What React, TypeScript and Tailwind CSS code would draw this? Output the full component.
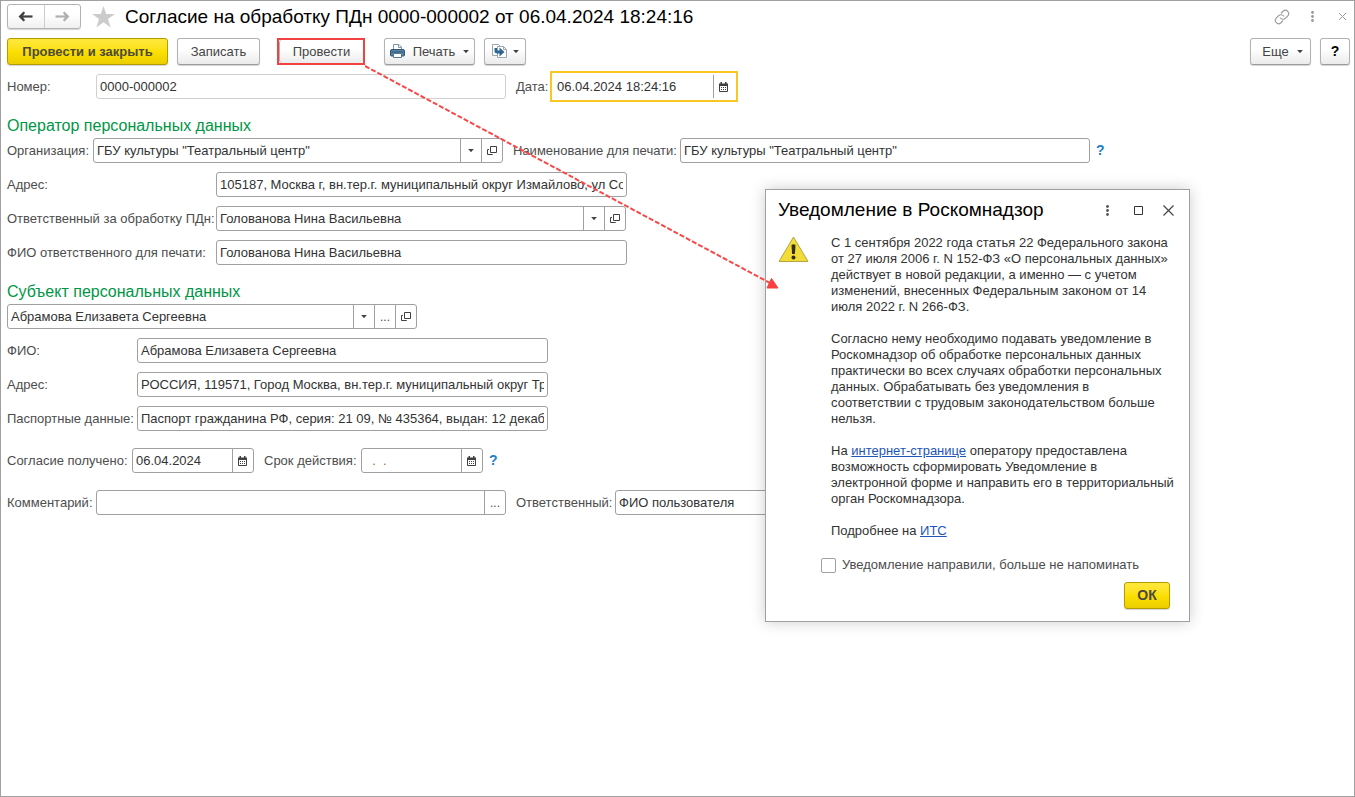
import React from 'react';

type FieldButton = 'calendar' | 'dropdown' | 'open' | 'more';

const CalendarIcon = () => (
  <svg width="9" height="10" viewBox="0 0 9 10" fill="none" className="mr-px" aria-hidden="true">
    <path d="M0.5 2.5h8v7h-8z" stroke="#404040" />
    <path d="M0 1.5h9V4H0zM1.500 0H3v2H1.500zM6 0h1.500v2H6z" fill="#404040" />
    <path d="M2 5h1v1H2zM4 5h1v1H4zM6 5h1v1H6zM2 7h1v1H2zM4 7h1v1H4zM6 7h1v1H6z" fill="#404040" />
  </svg>
);

const CaretIcon = () => (
  <svg width="6" height="3" viewBox="0 0 6 3" aria-hidden="true">
    <path d="M0.500 0h5L3 3z" fill="#404040" stroke="#404040" strokeWidth="0.400" />
  </svg>
);

const OpenIcon = () => (
  <svg width="10" height="10" viewBox="0 0 10 10" fill="none" stroke="#404040" aria-hidden="true">
    <path d="M3.500 0.500h6v6h-6z" />
    <path d="M2 3.500H0.500v5h5V8" />
  </svg>
);

const DotsIcon = ({ color }: { color: string }) => (
  <svg width="3" height="11" viewBox="0 0 3 11" fill={color} aria-hidden="true">
    <circle cx="1.500" cy="1.500" r="1.400" />
    <circle cx="1.500" cy="5.500" r="1.400" />
    <circle cx="1.500" cy="9.500" r="1.400" />
  </svg>
);

const PrinterIcon = () => (
  <svg width="15" height="15" viewBox="0 0 15 15" fill="none" aria-hidden="true">
    <path d="M3.500 6V0.500h5.500l2.500 2.500v3" fill="#fff" stroke="#7f98ac" />
    <path d="M8.500 0.500v3h3" stroke="#7f98ac" />
    <path d="M2 5.500h11a1.500 1.500 0 0 1 1.500 1.500v4a1 1 0 0 1-1 1h-12a1 1 0 0 1-1-1V7A1.500 1.500 0 0 1 2 5.500z" fill="#5583a8" stroke="#2f5673" />
    <path d="M1.500 8h12" stroke="#2f5673" />
    <path d="M3.500 9.500h8v4h-8z" fill="#fff" stroke="#58788f" />
  </svg>
);

const CopyToIcon = () => (
  <svg width="15" height="15" viewBox="0 0 15 15" fill="none" aria-hidden="true">
    <path d="M0.500 0.500h6l2 2v9h-8z" fill="#fff" stroke="#9aa7b1" />
    <path d="M5.500 2.500h6l3 3v8h-9z" fill="#fff" stroke="#9aa7b1" />
    <path d="M11.500 2.500v3h3" stroke="#9aa7b1" />
    <path d="M2.500 4h2.500v2.500h2.500V3.500l5 4.500-5 4.500V9.500H5.500Q2.500 9.500 2.500 7z" fill="#2d6791" />
  </svg>
);

const ArrowIcon = ({ color }: { color: string }) => (
  <svg width="15" height="11" viewBox="0 0 15 11" fill="none" aria-hidden="true">
    <path d="M3 5.500h11.500" stroke={color} strokeWidth="2.200" />
    <path d="M5.500 0.500L0.500 5.500l5 5 1.600-1.200L4.500 5.500l2.600-3.800z" fill={color} />
  </svg>
);

const buttonContent: Record<FieldButton, { label: string; icon: React.ReactNode }> = {
  calendar: { label: 'Выбрать дату', icon: <CalendarIcon /> },
  dropdown: { label: 'Показать список', icon: <CaretIcon /> },
  open: { label: 'Открыть', icon: <OpenIcon /> },
  more: { label: 'Выбрать', icon: <span className="text-[12px] leading-none">...</span> },
};

interface FieldProps {
  id: string;
  value: string;
  width: string;
  label?: string;
  labelWidth?: string;
  buttons?: FieldButton[];
  frame?: string;
  inputClass?: string;
}

const defaultFrame = 'h-[25px] border border-[#a0a0a0] rounded-[3px]';

const Field: React.FC<FieldProps> = ({
  id,
  value,
  width,
  label,
  labelWidth = '',
  buttons = [],
  frame = defaultFrame,
  inputClass = 'text-[#333]',
}) => (
  <div className="flex items-center">
    {label && (
      <label htmlFor={id} className={`shrink-0 whitespace-nowrap ${labelWidth}`}>
        {label}
      </label>
    )}
    <div className={`flex shrink-0 overflow-hidden bg-white ${frame} ${width}`}>
      <input
        id={id}
        defaultValue={value}
        aria-label={label ? undefined : 'Субъект'}
        className={`min-w-0 flex-1 px-[3px] outline-none ${inputClass}`}
      />
      {buttons.map((kind) => (
        <button
          key={kind}
          type="button"
          aria-label={buttonContent[kind].label}
          className="flex w-[21px] shrink-0 items-center justify-center border-l border-[#a0a0a0]"
        >
          {buttonContent[kind].icon}
        </button>
      ))}
    </div>
  </div>
);

const plainButton =
  'flex h-[27px] items-center justify-center rounded-[3px] border border-[#b3b3b3] border-b-[#9a9a9a] bg-linear-to-b from-white from-40% to-[#ebebeb] shadow-[0_1px_1px_#d4d4d4]';
const yellowButton =
  'flex h-[27px] items-center justify-center rounded-[3px] border border-[#b39b00] bg-linear-to-b from-[#ffe83c] via-[#fbe000] to-[#ebcd00] font-bold text-[#4d4a3a] shadow-[0_1px_1px_#d4d4d4]';

const Header = () => (
  <header className="flex h-[25px] items-center">
    <div className="flex h-[25px] w-[74px] rounded-[3px] border border-[#b3b3b3] bg-linear-to-b from-white from-40% to-[#f0f0f0] shadow-[0_1px_1px_#d4d4d4]">
      <button type="button" aria-label="Назад" className="flex flex-1 items-center justify-center border-r border-[#ccc]">
        <ArrowIcon color="#404040" />
      </button>
      <button type="button" aria-label="Вперед" className="flex flex-1 items-center justify-center">
        <span className="rotate-180">
          <ArrowIcon color="#b0b0b0" />
        </span>
      </button>
    </div>
    <button type="button" aria-label="Добавить в избранное" className="ml-[11px]">
      <svg width="23" height="22" viewBox="0 0 23 22" fill="#ccc" aria-hidden="true">
        <path d="M11.500 0l2.700 8H23l-7 5 2.700 8.500-7.200-5.200-7.200 5.200L7 13 0 8h8.800z" />
      </svg>
    </button>
    <h1 className="ml-[10px] text-[19px] leading-6 whitespace-nowrap text-black">
      Согласие на обработку ПДн 0000-000002 от 06.04.2024 18:24:16
    </h1>
    <div className="ml-auto flex items-center pr-[4px]">
      <button type="button" aria-label="Получить ссылку">
        <svg width="16" height="16" viewBox="0 0 24 24" fill="none" stroke="#999" strokeWidth="1.700" strokeLinecap="round" aria-hidden="true">
          <path d="M9.500 13.500a5 5 0 0 0 7.500.5l4-4a5 5 0 0 0-7-7l-3 3" />
          <path d="M14.500 10.500a5 5 0 0 0-7.500-.5l-4 4a5 5 0 0 0 7 7l3-3" />
        </svg>
      </button>
      <button type="button" aria-label="Меню" className="ml-[21px]">
        <DotsIcon color="#999" />
      </button>
      <button type="button" aria-label="Закрыть" className="ml-[25px]">
        <svg width="7" height="7" viewBox="0 0 7 7" stroke="#999" aria-hidden="true">
          <path d="M0 0l7 7M7 0L0 7" />
        </svg>
      </button>
    </div>
  </header>
);

const Toolbar = () => (
  <div className="mt-[9px] flex items-center text-[#444]">
    <button type="button" className={`w-[161px] ${yellowButton}`}>Провести и закрыть</button>
    <button type="button" className={`ml-[9px] w-[83px] ${plainButton}`}>Записать</button>
    <div className="ml-[17px] flex h-[27px] border-2 border-[#f24141]">
      <button
        type="button"
        className="w-[84px] rounded-[3px] border-l border-[#b3b3b3] bg-linear-to-b from-white from-40% to-[#ebebeb]"
      >
        Провести
      </button>
    </div>
    <button type="button" className={`ml-[19px] w-[91px] gap-2 ${plainButton}`}>
      <PrinterIcon />
      <span>Печать</span>
      <CaretIcon />
    </button>
    <button type="button" aria-label="Создать на основании" className={`ml-[9px] w-[42px] gap-[6px] ${plainButton}`}>
      <CopyToIcon />
      <CaretIcon />
    </button>
    <button type="button" className={`ml-auto w-[61px] gap-2 pl-[4px] ${plainButton}`}>
      Еще
      <CaretIcon />
    </button>
    <button type="button" className={`ml-[9px] w-[30px] text-[14px] font-bold text-black ${plainButton}`}>?</button>
  </div>
);

const Help = () => (
  <button type="button" aria-label="Подсказка" className="ml-[6px] text-[14px] font-bold text-[#1c7fc4]">?</button>
);

const SectionTitle = ({ children }: { children: React.ReactNode }) => (
  <h2 className="text-[16px] leading-5 text-[#009646]">{children}</h2>
);

const NoticeDialog = () => (
  <section
    role="dialog"
    aria-labelledby="notice-title"
    className="absolute top-[188px] left-[764px] w-[425px] border border-[#a0a0a0] bg-white px-[12px] pt-[8px] pb-[12px] shadow-[0_0_14px_rgba(0,0,0,0.2)]"
  >
    <div className="flex h-[24px] items-center">
      <h2 id="notice-title" className="text-[19px] leading-6 whitespace-nowrap text-black">
        Уведомление в Роскомнадзор
      </h2>
      <div className="ml-auto flex items-center pr-[3px]">
        <button type="button" aria-label="Меню">
          <DotsIcon color="#555" />
        </button>
        <button type="button" aria-label="Развернуть" className="ml-[25px]">
          <svg width="9" height="9" viewBox="0 0 9 9" fill="none" stroke="#333" aria-hidden="true">
            <path d="M0.500 0.500h8v8h-8z" />
          </svg>
        </button>
        <button type="button" aria-label="Закрыть" className="ml-[20px]">
          <svg width="11" height="11" viewBox="0 0 11 11" stroke="#444" strokeWidth="1.200" aria-hidden="true">
            <path d="M0.500 0.500l10 10M10.500 0.500l-10 10" />
          </svg>
        </button>
      </div>
    </div>

    <div className="mt-[13px] flex gap-[22px] text-[#333]">
      <svg width="31" height="27" viewBox="0 0 31 27" className="mt-[1px] shrink-0" aria-hidden="true">
        <path d="M15.500 1L30 25.500H1z" fill="#f3dc37" stroke="#b3a540" strokeLinejoin="round" />
        <path d="M13.500 9q2-1.500 4 0l-.6 9h-2.800z" fill="#332f10" />
        <circle cx="15.500" cy="21.500" r="2" fill="#332f10" />
      </svg>
      <div className="flex flex-col gap-4 leading-4 whitespace-nowrap">
        <p>
          С 1 сентября 2022 года статья 22 Федерального закона<br />
          от 27 июля 2006 г. N 152-ФЗ «О персональных данных»<br />
          действует в новой редакции, а именно — с учетом<br />
          изменений, внесенных Федеральным законом от 14<br />
          июля 2022 г. N 266-ФЗ.
        </p>
        <p>
          Согласно нему необходимо подавать уведомление в<br />
          Роскомнадзор об обработке персональных данных<br />
          практически во всех случаях обработки персональных<br />
          данных. Обрабатывать без уведомления в<br />
          соответствии с трудовым законодательством больше<br />
          нельзя.
        </p>
        <p>
          На <a href="#portal" className="text-[#1d55b8] underline">интернет-странице</a> оператору предоставлена<br />
          возможность сформировать Уведомление в<br />
          электронной форме и направить его в территориальный<br />
          орган Роскомнадзора.
        </p>
        <p>
          Подробнее на <a href="#its" className="text-[#1d55b8] underline">ИТС</a>
        </p>
      </div>
    </div>

    <label className="mt-[18px] ml-[43px] flex items-center gap-[6px] leading-4">
      <input
        type="checkbox"
        className="h-[15px] w-[15px] appearance-none rounded-[2px] border border-[#a0a0a0] bg-white checked:bg-[#fbe000]"
      />
      Уведомление направили, больше не напоминать
    </label>
    <div className="mt-[9px] flex justify-end pr-[7px]">
      <button type="button" className={`w-[46px] text-[14px] ${yellowButton}`}>ОК</button>
    </div>
  </section>
);

// Dashed callout from the "Провести" button to the notice window
const Callout = () => (
  <svg className="pointer-events-none absolute top-[64px] left-[364px]" width="416" height="228" viewBox="0 0 416 228" aria-hidden="true">
    <path d="M0 1L405 218" stroke="#f94848" strokeWidth="2" strokeDasharray="5 2" />
    <path d="M413 223L402 223L406.500 213.500z" fill="#f94040" stroke="#f94040" strokeLinejoin="round" />
  </svg>
);

export default function App() {
  return (
    <main className="relative min-h-screen overflow-hidden border border-[#a0a0a0] bg-white pt-[3px] pr-[4px] pl-[6px] font-['Liberation_Sans',Arial,sans-serif] text-[13px] text-[#4d4d4d]">
      <Header />
      <Toolbar />

      <div className="mt-[6px] flex items-center">
        <Field
          id="number"
          label="Номер:"
          labelWidth="w-[89px]"
          value="0000-000002"
          width="w-[410px]"
          frame="h-[25px] border border-[#d0d0d0] rounded-[3px]"
        />
        <div className="ml-[10px]">
          <Field
            id="date"
            label="Дата:"
            labelWidth="w-[34px]"
            value="06.04.2024 18:24:16"
            width="w-[188px]"
            frame="h-[31px] border-2 border-[#f9c623] p-[2px]"
            buttons={['calendar']}
          />
        </div>
      </div>

      <section className="mt-[14px]">
        <SectionTitle>Оператор персональных данных</SectionTitle>
        <div className="mt-[2px] flex flex-col gap-[9px]">
          <div className="flex items-center">
            <Field
              id="organization"
              label="Организация:"
              labelWidth="w-[86px]"
              value={'ГБУ культуры "Театральный центр"'}
              width="w-[410px]"
              buttons={['dropdown', 'open']}
            />
            <div className="ml-[10px]">
              <Field
                id="print-name"
                label="Наименование для печати:"
                labelWidth="w-[167px]"
                value={'ГБУ культуры "Театральный центр"'}
                width="w-[410px]"
              />
            </div>
            <Help />
          </div>
          <Field
            id="operator-address"
            label="Адрес:"
            labelWidth="w-[209px]"
            value="105187, Москва г, вн.тер.г. муниципальный округ Измайлово, ул Советская"
            width="w-[411px]"
          />
          <Field
            id="responsible-person"
            label="Ответственный за обработку ПДн:"
            labelWidth="w-[209px]"
            value="Голованова Нина Васильевна"
            width="w-[410px]"
            buttons={['dropdown', 'open']}
          />
          <Field
            id="responsible-print"
            label="ФИО ответственного для печати:"
            labelWidth="w-[209px]"
            value="Голованова Нина Васильевна"
            width="w-[411px]"
          />
        </div>
      </section>

      <section className="mt-[17px]">
        <SectionTitle>Субъект персональных данных</SectionTitle>
        <div className="mt-[2px] flex flex-col gap-[9px]">
          <Field
            id="subject"
            value="Абрамова Елизавета Сергеевна"
            width="w-[410px]"
            buttons={['dropdown', 'more', 'open']}
          />
          <Field
            id="subject-name"
            label="ФИО:"
            labelWidth="w-[130px]"
            value="Абрамова Елизавета Сергеевна"
            width="w-[411px]"
          />
          <Field
            id="subject-address"
            label="Адрес:"
            labelWidth="w-[130px]"
            value="РОССИЯ, 119571, Город Москва, вн.тер.г. муниципальный округ Тропарево"
            width="w-[411px]"
          />
          <Field
            id="passport"
            label="Паспортные данные:"
            labelWidth="w-[130px]"
            value="Паспорт гражданина РФ, серия: 21 09, № 435364, выдан: 12 декабря 2009"
            width="w-[411px]"
          />
        </div>
      </section>

      <div className="mt-[17px] flex items-center">
        <Field
          id="received"
          label="Согласие получено:"
          labelWidth="w-[125px]"
          value="06.04.2024"
          width="w-[122px]"
          buttons={['calendar']}
        />
        <div className="ml-[10px]">
          <Field
            id="valid-until"
            label="Срок действия:"
            labelWidth="w-[97px]"
            value="  .  ."
            width="w-[122px]"
            buttons={['calendar']}
            inputClass="text-[#b06a1c]"
          />
        </div>
        <Help />
      </div>

      <div className="mt-[17px] flex items-center">
        <Field
          id="comment"
          label="Комментарий:"
          labelWidth="w-[89px]"
          value=""
          width="w-[410px]"
          buttons={['more']}
        />
        <div className="ml-[10px]">
          <Field
            id="responsible"
            label="Ответственный:"
            labelWidth="w-[99px]"
            value="ФИО пользователя"
            width="w-[410px]"
          />
        </div>
      </div>

      <NoticeDialog />
      <Callout />
    </main>
  );
}
